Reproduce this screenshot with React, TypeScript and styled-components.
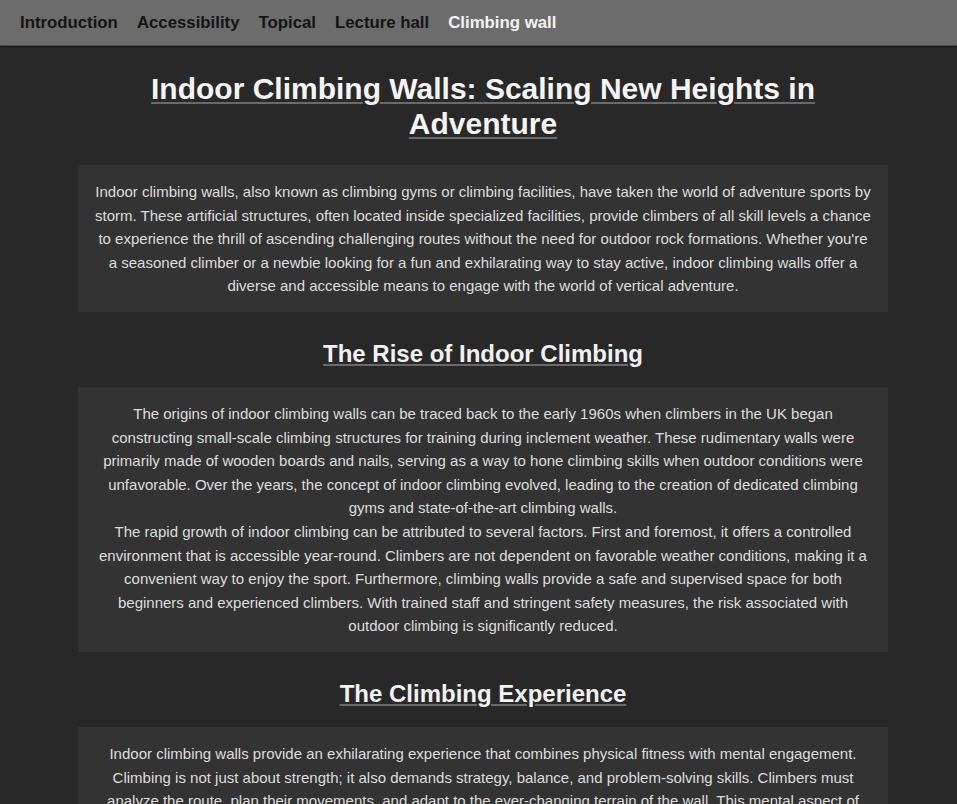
import React from "react";
import styled, { createGlobalStyle } from "styled-components";

const Global = createGlobalStyle`
  html, body { margin: 0; padding: 0; background: #282828; }
  body { font-family: "Liberation Sans", Arial, sans-serif; color: #dcdcdc; }
  * { box-sizing: border-box; }
`;

const NavBar = styled.nav`
  height: 46px;
  background: #6c6c6c;
  border-bottom: 1px solid #4a4a4a;
  box-shadow: 0 1px 2px rgba(0, 0, 0, 0.45);
  display: flex;
  align-items: center;
  gap: 19px;
  padding: 0 0 0 20px;
`;

const NavLink = styled.a<{ $active?: boolean }>`
  font-size: 16.8px;
  font-weight: 700;
  color: ${(p) => (p.$active ? "#f4f4f4" : "#141414")};
  text-decoration: none;
  cursor: pointer;
`;

const Main = styled.main`
  padding: 25px 69px 0 78px;
`;

const Title = styled.h1`
  margin: 0 0 24px;
  font-size: 30px;
  line-height: 35px;
  font-weight: 700;
  color: #f5f5f5;
  text-align: center;
  text-decoration: underline;
  text-decoration-color: #6a6a6a;
  text-decoration-thickness: 2px;
  text-underline-offset: 3px;
  padding: 0 60px;
`;

const Heading = styled.h2`
  margin: 28px 0 19px;
  font-size: 24px;
  line-height: 28px;
  font-weight: 700;
  color: #f2f2f2;
  text-align: center;
  text-decoration: underline;
  text-decoration-color: #6a6a6a;
  text-decoration-thickness: 2px;
  text-underline-offset: 2px;
`;

const Box = styled.section`
  background: #333333;
  padding: 15px 15px 14px;
`;

const Para = styled.p`
  margin: 0;
  font-size: 15px;
  line-height: 23.6px;
  text-align: center;
  color: #dedede;
`;

const sections = [
  {
    title: "The Rise of Indoor Climbing",
    paras: [
      "The origins of indoor climbing walls can be traced back to the early 1960s when climbers in the UK began constructing small-scale climbing structures for training during inclement weather. These rudimentary walls were primarily made of wooden boards and nails, serving as a way to hone climbing skills when outdoor conditions were unfavorable. Over the years, the concept of indoor climbing evolved, leading to the creation of dedicated climbing gyms and state-of-the-art climbing walls.",
      "The rapid growth of indoor climbing can be attributed to several factors. First and foremost, it offers a controlled environment that is accessible year-round. Climbers are not dependent on favorable weather conditions, making it a convenient way to enjoy the sport. Furthermore, climbing walls provide a safe and supervised space for both beginners and experienced climbers. With trained staff and stringent safety measures, the risk associated with outdoor climbing is significantly reduced.",
    ],
  },
  {
    title: "The Climbing Experience",
    paras: [
      "Indoor climbing walls provide an exhilarating experience that combines physical fitness with mental engagement. Climbing is not just about strength; it also demands strategy, balance, and problem-solving skills. Climbers must analyze the route, plan their movements, and adapt to the ever-changing terrain of the wall. This mental aspect of climbing makes it a captivating and rewarding activity for people of all ages and backgrounds.",
    ],
  },
];

export default function App() {
  const links = ["Introduction", "Accessibility", "Topical", "Lecture hall", "Climbing wall"];
  return (
    <>
      <Global />
      <NavBar>
        {links.map((l) => (
          <NavLink key={l} $active={l === "Climbing wall"}>
            {l}
          </NavLink>
        ))}
      </NavBar>
      <Main>
        <Title>Indoor Climbing Walls: Scaling New Heights in Adventure</Title>
        <Box>
          <Para>
            Indoor climbing walls, also known as climbing gyms or climbing facilities, have taken the world of adventure sports by storm. These artificial structures, often located inside specialized facilities, provide climbers of all skill levels a chance to experience the thrill of ascending challenging routes without the need for outdoor rock formations. Whether you're a seasoned climber or a newbie looking for a fun and exhilarating way to stay active, indoor climbing walls offer a diverse and accessible means to engage with the world of vertical adventure.
          </Para>
        </Box>
        {sections.map((s) => (
          <React.Fragment key={s.title}>
            <Heading>{s.title}</Heading>
            <Box>
              {s.paras.map((p, i) => (
                <Para key={i}>{p}</Para>
              ))}
            </Box>
          </React.Fragment>
        ))}
      </Main>
    </>
  );
}
